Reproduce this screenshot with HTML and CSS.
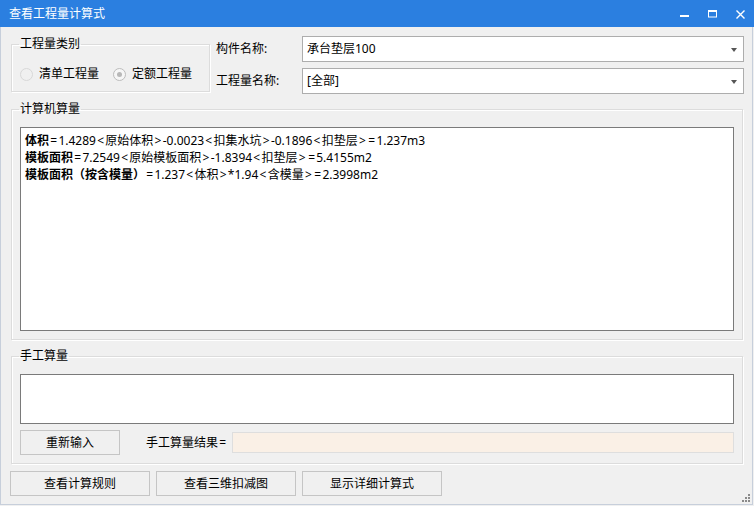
FILE: index.html
```html
<!DOCTYPE html>
<html lang="zh-CN">
<head>
<meta charset="utf-8">
<title>查看工程量计算式</title>
<link rel="stylesheet" href="styles.css">
</head>
<body>
<div class="titlebar">
  <span class="title">查看工程量计算式</span>
  <div class="controls">
    <svg class="ctl" width="28" height="27" viewBox="0 0 28 27"><rect x="10" y="15" width="9" height="2" fill="#fff"/></svg>
    <svg class="ctl" width="28" height="27" viewBox="0 0 28 27"><rect x="10.5" y="10.5" width="8" height="6.5" fill="none" stroke="#fff" stroke-width="1"/><rect x="10" y="10" width="9" height="2" fill="#fff"/></svg>
    <svg class="ctl" width="28" height="27" viewBox="0 0 28 27"><path d="M10.5 10.5 L18.5 18.5 M18.5 10.5 L10.5 18.5" stroke="#fff" stroke-width="1.4" fill="none"/></svg>
  </div>
</div>
<div class="dialog">
  <div class="top-row">
    <fieldset class="group type-group">
      <legend>工程量类别</legend>
      <div class="radios">
        <label class="radio disabled"><span class="circle"></span>清单工程量</label>
        <label class="radio checked"><span class="circle"><span class="dot"></span></span>定额工程量</label>
      </div>
    </fieldset>
    <div class="fields">
      <div class="field-row">
        <span class="field-label">构件名称:</span>
        <div class="combo">承台垫层100<span class="arrow"></span></div>
      </div>
      <div class="field-row">
        <span class="field-label">工程量名称:</span>
        <div class="combo">[全部]<span class="arrow"></span></div>
      </div>
    </div>
  </div>

  <fieldset class="group calc-group">
    <legend>计算机算量</legend>
    <div class="textbox calc-text">
      <div class="line"><b>体积</b><span class="op">=</span>1.4289<span class="op">&lt;</span>原始体积<span class="op">&gt;</span>-0.0023<span class="op">&lt;</span>扣集水坑<span class="op">&gt;</span>-0.1896<span class="op">&lt;</span>扣垫层<span class="op">&gt;</span><span class="op">=</span>1.237m3</div>
      <div class="line"><b>模板面积</b><span class="op">=</span>7.2549<span class="op">&lt;</span>原始模板面积<span class="op">&gt;</span>-1.8394<span class="op">&lt;</span>扣垫层<span class="op">&gt;</span><span class="op">=</span>5.4155m2</div>
      <div class="line"><b>模板面积（按含模量）</b><span class="op">=</span>1.237<span class="op">&lt;</span>体积<span class="op">&gt;</span>*1.94<span class="op">&lt;</span>含模量<span class="op">&gt;</span><span class="op">=</span>2.3998m2</div>
    </div>
  </fieldset>

  <fieldset class="group manual-group">
    <legend>手工算量</legend>
    <div class="textbox manual-text"></div>
    <div class="manual-row">
      <button class="btn reset-btn">重新输入</button>
      <span class="result-label">手工算量结果<span class="op">=</span></span>
      <div class="result-field"></div>
    </div>
  </fieldset>

  <div class="bottom-row">
    <button class="btn wide-btn">查看计算规则</button>
    <button class="btn wide-btn">查看三维扣减图</button>
    <button class="btn wide-btn">显示详细计算式</button>
  </div>

  <svg class="grip" width="8" height="8" viewBox="0 0 8 8">
    <rect x="6" y="0" width="2" height="2" fill="#8a8a8a"/>
    <rect x="3" y="3" width="2" height="2" fill="#8a8a8a"/>
    <rect x="6" y="3" width="2" height="2" fill="#8a8a8a"/>
    <rect x="0" y="6" width="2" height="2" fill="#8a8a8a"/>
    <rect x="3" y="6" width="2" height="2" fill="#8a8a8a"/>
    <rect x="6" y="6" width="2" height="2" fill="#8a8a8a"/>
  </svg>
</div>
</body>
</html>
```

FILE: styles.css
```css
* { box-sizing: border-box; }
html, body { margin: 0; padding: 0; background: #f0f0f0; }
body {
  font-family: "Noto Sans", "Noto Sans CJK SC", "Microsoft YaHei", sans-serif;
  font-size: 12px;
  color: #000;
  width: 754px;
  height: 506px;
  overflow: hidden;
}

.titlebar {
  width: 754px;
  height: 27px;
  background: #2b7fe0;
  display: flex;
  align-items: center;
  justify-content: space-between;
}
.title {
  color: #fff;
  padding-left: 9px;
  line-height: 27px;
}
.controls { display: flex; }
.ctl { display: block; }

.dialog {
  position: relative;
  width: 753px;
  height: 478px;
  border: 1px solid #c7cfdb;
  border-top: none;
  background: #f0f0f0;
  padding: 9px 0 0 9px;
}

.group {
  margin: 0 0 0 1px;
  padding: 0 8px 8px 8px;
  border: 1px solid #dcdcdc;
  box-shadow: inset 1px 1px 0 #ffffff, 1px 1px 0 #ffffff;
  min-width: 0;
}
.group legend {
  margin-left: -1px;
  padding: 0 1px;
  line-height: 16px;
  height: 16px;
}

.top-row { display: flex; height: 56px; }
.type-group { width: 199px; height: 56px; padding-top: 14px; }
.radios { display: flex; align-items: center; height: 16px; }
.radio { display: flex; align-items: center; line-height: 16px; }
.radio + .radio { margin-left: 14px; }
.circle {
  width: 13px;
  height: 13px;
  border-radius: 50%;
  margin-right: 6px;
  display: flex;
  align-items: center;
  justify-content: center;
}
.radio.disabled .circle { border: 1px solid #d8d8d8; background: #f0f0f0; }
.radio.checked .circle { border: 1px solid #bcbcbc; background: #f6f6f6; }
.dot { width: 5px; height: 5px; border-radius: 50%; background: #b8b8b8; }

.fields { margin-left: 6px; display: flex; flex-direction: column; gap: 6px; }
.field-row { display: flex; align-items: center; height: 26px; }
.field-label { width: 86px; line-height: 16px; }
.combo {
  position: relative;
  width: 442px;
  height: 26px;
  border: 1px solid #adadad;
  background: #fff;
  padding-left: 4px;
  line-height: 24px;
}
.arrow {
  position: absolute;
  right: 6px;
  top: 11px;
  width: 0;
  height: 0;
  border-left: 3px solid transparent;
  border-right: 3px solid transparent;
  border-top: 4px solid #555;
}

.calc-group { width: 732px; height: 239px; margin-top: 9px; padding-top: 10px; }
.textbox { border: 1px solid #7a7a7a; background: #fff; }
.calc-text { height: 204px; padding: 4px 4px; }
.line { line-height: 17px; white-space: nowrap; }
.line b { font-weight: bold; }
.op { margin: 0 1.25px; }

.manual-group { width: 732px; height: 116px; margin-top: 8px; padding-top: 10px; }
.manual-text { height: 50px; }
.manual-row { display: flex; align-items: center; margin-top: 6px; height: 25px; }

.btn {
  font-family: inherit;
  font-size: 12px;
  color: #000;
  background: #f0f0f0;
  border: 1px solid #c5c5c5;
  height: 25px;
  padding: 0;
  margin: 0;
  line-height: 16px;
}
.reset-btn { width: 100px; }
.result-label { margin-left: 26px; width: 86px; line-height: 16px; white-space: nowrap; }
.result-field {
  flex: 1;
  height: 21px;
  background: #faf0e6;
  border: 1px solid #dedede;
}

.bottom-row { display: flex; gap: 6px; margin-top: 7px; }
.wide-btn { width: 140px; }

.grip { position: absolute; right: 2px; bottom: 2px; display: block; }
```
